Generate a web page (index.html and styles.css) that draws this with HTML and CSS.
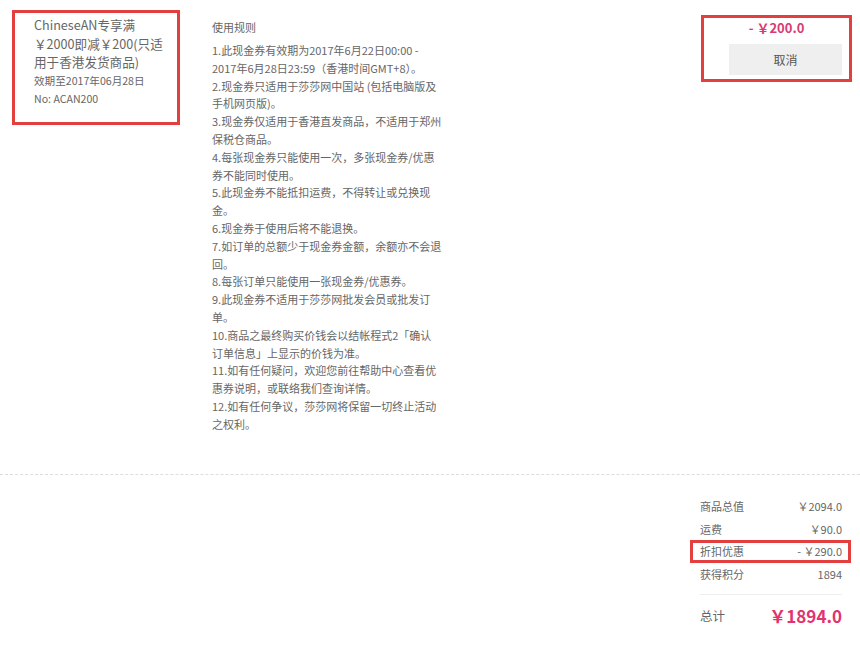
FILE: index.html
```html
<!DOCTYPE html>
<html lang="zh-CN">
<head>
<meta charset="utf-8">
<title>优惠券</title>
<link rel="stylesheet" href="styles.css">
</head>
<body>
<div class="page">
  <section class="top">
    <div class="coupon">
      <div class="coupon-title">ChineseAN专享满<br>￥2000即减￥200(只适<br>用于香港发货商品)</div>
      <div class="coupon-meta">效期至2017年06月28日</div>
      <div class="coupon-meta">No: ACAN200</div>
    </div>
    <div class="rules">
      <div class="rules-head">使用规则</div>
      <div class="rules-list">
        <p>1.此现金券有效期为2017年6月22日00:00 -<br>2017年6月28日23:59（香港时间GMT+8）。</p>
        <p>2.现金券只适用于莎莎网中国站 (包括电脑版及<br>手机网页版)。</p>
        <p>3.现金券仅适用于香港直发商品，不适用于郑州<br>保税仓商品。</p>
        <p>4.每张现金券只能使用一次，多张现金券/优惠<br>券不能同时使用。</p>
        <p>5.此现金券不能抵扣运费，不得转让或兑换现<br>金。</p>
        <p>6.现金券于使用后将不能退换。</p>
        <p>7.如订单的总额少于现金券金额，余额亦不会退<br>回。</p>
        <p>8.每张订单只能使用一张现金券/优惠券。</p>
        <p>9.此现金券不适用于莎莎网批发会员或批发订<br>单。</p>
        <p>10.商品之最终购买价钱会以结帐程式2「确认<br>订单信息」上显示的价钱为准。</p>
        <p>11.如有任何疑问，欢迎您前往帮助中心查看优<br>惠券说明，或联络我们查询详情。</p>
        <p>12.如有任何争议，莎莎网将保留一切终止活动<br>之权利。</p>
      </div>
    </div>
    <div class="action">
      <div class="discount">- ￥200.0</div>
      <button class="cancel" type="button">取消</button>
    </div>
  </section>
  <section class="summary">
    <div class="row"><span>商品总值</span><span>￥2094.0</span></div>
    <div class="row"><span>运费</span><span>￥90.0</span></div>
    <div class="row row-mark"><span>折扣优惠</span><span>- ￥290.0</span></div>
    <div class="row"><span>获得积分</span><span>1894</span></div>
    <div class="total"><span class="total-label">总计</span><span class="total-value">￥1894.0</span></div>
  </section>
</div>
</body>
</html>
```

FILE: styles.css
```css
* { box-sizing: border-box; }
html, body { margin: 0; padding: 0; background: #fff; }
body {
  font-family: "Noto Sans CJK SC", "Noto Sans", "Liberation Sans", sans-serif;
  color: #666;
  width: 860px;
  height: 647px;
  overflow: hidden;
}
.top {
  display: flex;
  align-items: flex-start;
  height: 475px;
  padding-top: 10px;
  border-bottom: 1px dashed #ddd;
}
.coupon {
  margin-left: 12px;
  width: 168px;
  height: 115px;
  border: 3px solid #e43f3f;
  padding: 3px 0 0 19px;
  color: #666;
}
.coupon-title {
  font-size: 12.6px;
  line-height: 18.5px;
}
.coupon-meta {
  font-size: 10.6px;
  line-height: 18px;
}
.rules {
  margin-left: 32px;
  margin-top: 8px;
  width: 240px;
  font-size: 11px;
  color: #666;
}
.rules-head {
  line-height: 18px;
  margin-bottom: 6px;
}
.rules-list p {
  margin: 0;
  line-height: 17.8px;
  white-space: nowrap;
}
.action {
  margin-left: auto;
  margin-right: 8px;
  margin-top: 5px;
  width: 151px;
  height: 67px;
  border: 3px solid #e43f3f;
  display: flex;
  flex-direction: column;
}
.discount {
  text-align: center;
  color: #d93a72;
  font-weight: bold;
  font-size: 13px;
  line-height: 20px;
}
.cancel {
  margin: 6px 7px 0 25px;
  height: 31px;
  border: none;
  background: #efefef;
  color: #555;
  font-family: inherit;
  font-size: 12px;
  padding: 0;
}
.summary {
  margin-left: 700px;
  width: 142px;
  padding-top: 20px;
  font-size: 11px;
  color: #666;
}
.row {
  display: flex;
  justify-content: space-between;
  line-height: 22.7px;
}
.row-mark {
  margin: 0 -9px 0 -10px;
  padding: 0 6px 0 7px;
  border: 3px solid #e43f3f;
  line-height: 16.7px;
}
.total {
  margin-top: 8px;
  border-top: 1px solid #eee;
  padding-top: 9px;
  display: flex;
  justify-content: space-between;
  align-items: center;
}
.total-label {
  font-size: 12.5px;
}
.total-value {
  color: #e2326f;
  font-weight: bold;
  font-size: 17px;
  line-height: 24px;
}
```
